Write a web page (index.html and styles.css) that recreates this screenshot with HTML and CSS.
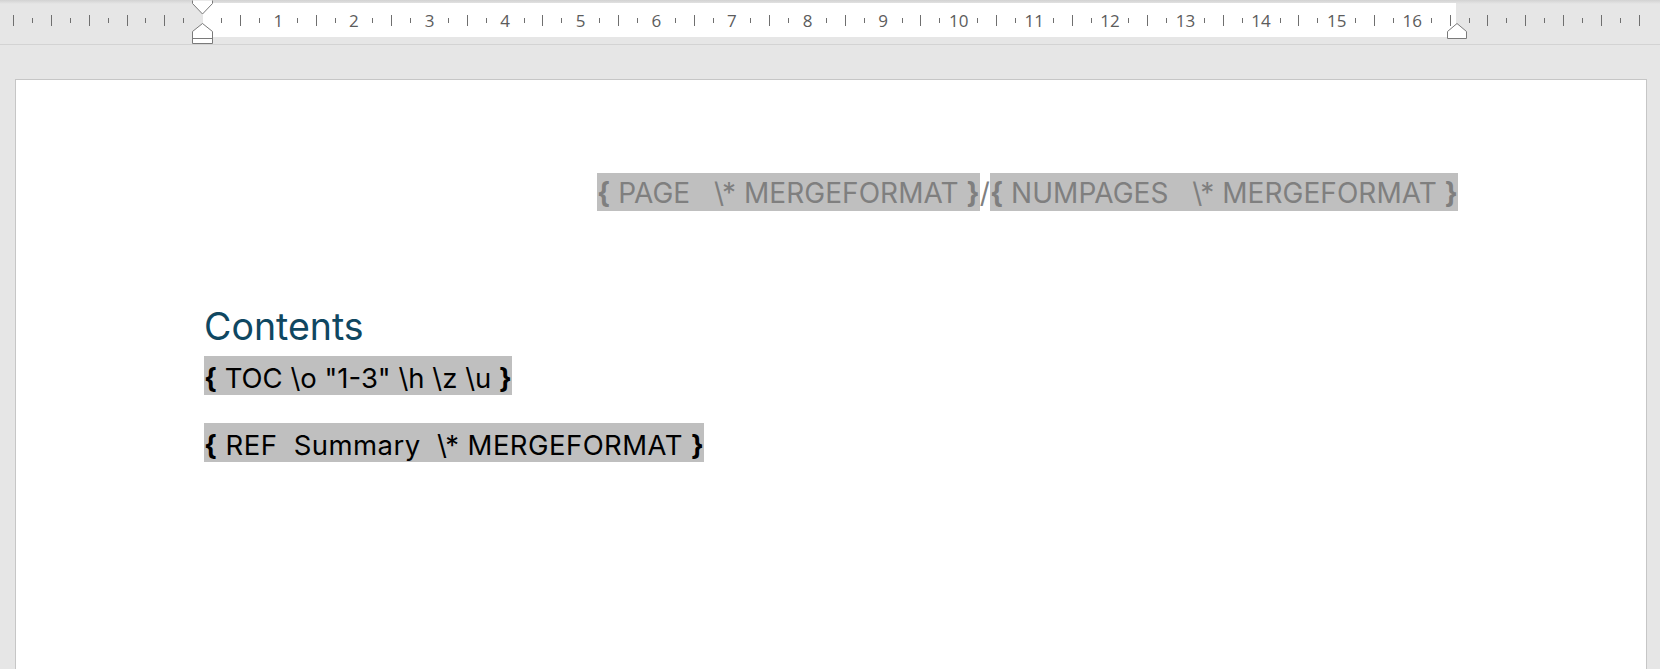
FILE: index.html
```html
<!DOCTYPE html>
<html lang="en">
<head>
<meta charset="utf-8">
<title>Document</title>
<link rel="stylesheet" href="styles.css">
</head>
<body>
<div class="ruler">
  <svg class="ruler-svg" width="1660" height="44" viewBox="0 0 1660 44">
    <defs>
      <linearGradient id="topshade" x1="0" y1="0" x2="0" y2="1">
        <stop offset="0" stop-color="#d2d2d2"/>
        <stop offset="1" stop-color="#e6e6e6"/>
      </linearGradient>
    </defs>
    <rect x="0" y="0" width="1660" height="4" fill="url(#topshade)"/>
    <rect x="203" y="3" width="1253" height="34" fill="#ffffff"/>
    <path class="tick" d="M13.5 15V26M51.5 15V26M89.5 15V26M127.5 15V26M164.5 15V26M240.5 15V26M316.5 15V26M391.5 15V26M467.5 15V26M542.5 15V26M618.5 15V26M694.5 15V26M769.5 15V26M845.5 15V26M920.5 15V26M996.5 15V26M1072.5 15V26M1147.5 15V26M1223.5 15V26M1298.5 15V26M1374.5 15V26M1450.5 15V26M1487.5 15V26M1525.5 15V26M1563.5 15V26M1601.5 15V26M1639.5 15V26"/>
    <path class="tick" d="M32.5 18V23M70.5 18V23M108.5 18V23M145.5 18V23M183.5 18V23M221.5 18V23M259.5 18V23M297.5 18V23M335.5 18V23M372.5 18V23M410.5 18V23M448.5 18V23M486.5 18V23M524.5 18V23M561.5 18V23M599.5 18V23M637.5 18V23M675.5 18V23M713.5 18V23M750.5 18V23M788.5 18V23M826.5 18V23M864.5 18V23M902.5 18V23M939.5 18V23M977.5 18V23M1015.5 18V23M1053.5 18V23M1091.5 18V23M1128.5 18V23M1166.5 18V23M1204.5 18V23M1242.5 18V23M1280.5 18V23M1317.5 18V23M1355.5 18V23M1393.5 18V23M1431.5 18V23M1469.5 18V23M1506.5 18V23M1544.5 18V23M1582.5 18V23M1620.5 18V23"/>
    <g class="ruler-num">
      <text x="278.3" y="26.5">1</text>
      <text x="353.9" y="26.5">2</text>
      <text x="429.5" y="26.5">3</text>
      <text x="505.1" y="26.5">4</text>
      <text x="580.7" y="26.5">5</text>
      <text x="656.3" y="26.5">6</text>
      <text x="731.9" y="26.5">7</text>
      <text x="807.5" y="26.5">8</text>
      <text x="883.1" y="26.5">9</text>
      <text x="958.7" y="26.5">10</text>
      <text x="1034.3" y="26.5">11</text>
      <text x="1109.9" y="26.5">12</text>
      <text x="1185.5" y="26.5">13</text>
      <text x="1261.1" y="26.5">14</text>
      <text x="1336.7" y="26.5">15</text>
      <text x="1412.3" y="26.5">16</text>
    </g>
    <path class="marker" d="M192.5 0.5V3.5L202.5 14L212.5 3.5V0.5"/>
    <path class="marker" d="M202.5 23.5L192.5 31.5V43.5H212.5V31.5Z"/>
    <path class="marker-line" d="M192.5 38.5H212.5"/>
    <path class="marker" d="M1457 23.5L1447.5 31.5V38.5H1466.5V31.5Z"/>
  </svg>
</div>
<div class="workspace">
  <div class="page">
    <div class="header-line">
      <span class="field field-header"><b>{</b> PAGE   \* MERGEFORMAT <b>}</b></span><span class="sep-header">/</span><span class="field field-header"><b>{</b> NUMPAGES   \* MERGEFORMAT <b>}</b></span>
    </div>
    <h1 class="toc-title">Contents</h1>
    <div class="para"><span class="field field-body"><b>{</b> TOC \o "1-3" \h \z \u <b>}</b></span></div>
    <div class="para para-ref"><span class="field field-body field-ref"><b>{</b> REF  Summary  \* MERGEFORMAT <b>}</b></span></div>
  </div>
</div>
</body>
</html>
```

FILE: styles.css
```css
html, body {
  margin: 0;
  padding: 0;
}
body {
  width: 1660px;
  height: 669px;
  overflow: hidden;
  background: #e6e6e6;
  font-family: "Inter", "Liberation Sans", sans-serif;
}
.ruler {
  height: 44px;
  border-bottom: 1px solid #d3d3d3;
  background: #e6e6e6;
}
.ruler-svg {
  display: block;
}
.tick {
  stroke: #6f6f6f;
  stroke-width: 1;
  fill: none;
}
.ruler-num text {
  font-family: "Open Sans", "Noto Sans", sans-serif;
  font-size: 17px;
  fill: #5c5c5c;
  text-anchor: middle;
}
.marker {
  fill: #ffffff;
  stroke: #7a7a7a;
  stroke-width: 1;
}
.marker-line {
  stroke: #7a7a7a;
  stroke-width: 1;
  fill: none;
}
.workspace {
  padding: 34px 0 0 15px;
}
.page {
  box-sizing: border-box;
  width: 1632px;
  height: 700px;
  background: #ffffff;
  border: 1px solid #c6c6c6;
  padding: 93px 188px 0 188px;
}
.header-line {
  display: flex;
  justify-content: flex-end;
  align-items: flex-start;
  height: 38px;
}
.field {
  display: inline-block;
  white-space: pre;
  background: #bfbfbf;
}
.field b {
  font-weight: 700;
}
.field-header,
.sep-header {
  font-size: 28px;
  line-height: 29px;
  padding-top: 6px;
  padding-bottom: 3px;
  letter-spacing: 0.05px;
  color: #7f7f7f;
}
.sep-header {
  white-space: pre;
}
.toc-title {
  margin: 86px 0 0 0;
  font-size: 37.5px;
  line-height: 59px;
  font-weight: 400;
  color: #0f4761;
}
.para {
  display: flex;
  align-items: flex-start;
  height: 39px;
}
.para-ref {
  margin-top: 28px;
}
.field-body {
  font-size: 27.5px;
  line-height: 34px;
  padding-top: 5px;
  color: #000000;
}
.field-ref {
  letter-spacing: 0.45px;
}
```
